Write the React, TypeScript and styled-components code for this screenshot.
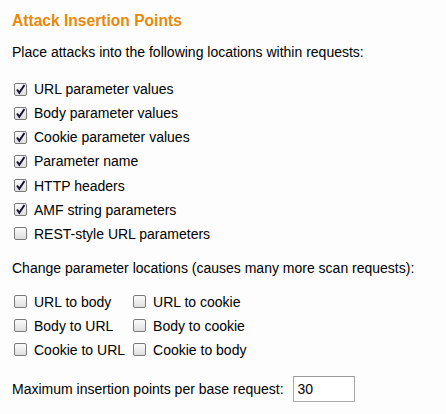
import React from 'react';
import styled, {createGlobalStyle} from 'styled-components';

const GlobalStyles = createGlobalStyle`
  html, body {
    margin: 0;
    padding: 0;
    background: #fdfdfd;
  }
  body {
    font-family: "Liberation Sans", Arial, sans-serif;
    font-size: 14px;
    color: #000;
  }
`

const Panel = styled.section`
  width: 446px;
  height: 414px;
  padding: 11px 12px 0;
  box-sizing: border-box;
  display: flex;
  flex-direction: column;
`

const Title = styled.h2`
  margin: 0;
  font-size: 15.6px;
  font-weight: bold;
  color: #e8890c;
  line-height: 20px;
`

const Text = styled.p<{ top: number }>`
  margin: ${({top}) => top}px 0 0;
  line-height: 16px;
`

const List = styled.div`
  display: flex;
  flex-direction: column;
  gap: 8.17px;
  margin-top: 21px;
  padding-left: 2px;
`

const Grid = styled.div`
  display: grid;
  grid-template-columns: auto auto;
  justify-content: start;
  column-gap: 8px;
  row-gap: 8px;
  margin-top: 18px;
  padding-left: 2px;
`

const Row = styled.label`
  display: flex;
  align-items: center;
  gap: 7px;
  height: 16px;
  line-height: 16px;
  white-space: nowrap;
`

const Box = styled.span<{ checked: boolean }>`
  width: 13px;
  height: 13px;
  box-sizing: border-box;
  border: 1px solid #7a7a7a;
  border-radius: 2px;
  background: linear-gradient(#fbfbfb, #dedede);
  display: flex;
  align-items: center;
  justify-content: center;
  flex-shrink: 0;
`

const Field = styled.div`
  display: flex;
  align-items: center;
  gap: 9px;
  margin-top: 18px;
`

const NumberInput = styled.input`
  width: 62px;
  height: 26px;
  box-sizing: border-box;
  border: 1px solid #a9a9a9;
  border-top-color: #9a9a9a;
  padding: 0 4px;
  font-family: "Liberation Sans", Arial, sans-serif;
  font-size: 14px;
  background: #fff;
  outline: none;
`

function Checkbox({checked, label}: { checked: boolean, label: string }) {
  return (
    <Row>
      <Box checked={checked}>
        {checked && (
          <svg width="11" height="11" viewBox="0 0 11 11">
            <path d="M2 5.5 L4.3 8.8 L9.5 1" fill="none" stroke="#141430" strokeWidth="2"/>
          </svg>
        )}
      </Box>
      {label}
    </Row>
  );
}

const points = [
  {label: 'URL parameter values', checked: true},
  {label: 'Body parameter values', checked: true},
  {label: 'Cookie parameter values', checked: true},
  {label: 'Parameter name', checked: true},
  {label: 'HTTP headers', checked: true},
  {label: 'AMF string parameters', checked: true},
  {label: 'REST-style URL parameters', checked: false},
];

const moves = ['URL to body', 'URL to cookie', 'Body to URL', 'Body to cookie', 'Cookie to URL', 'Cookie to body'];

function App() {
  return (
    <Panel>
      <GlobalStyles/>
      <Title>Attack Insertion Points</Title>
      <Text top={13}>Place attacks into the following locations within requests:</Text>
      <List>
        {points.map(p => <Checkbox key={p.label} checked={p.checked} label={p.label}/>)}
      </List>
      <Text top={18}>Change parameter locations (causes many more scan requests):</Text>
      <Grid>
        {moves.map(m => <Checkbox key={m} checked={false} label={m}/>)}
      </Grid>
      <Field>
        <span>Maximum insertion points per base request:</span>
        <NumberInput defaultValue="30"/>
      </Field>
    </Panel>
  );
}

export default App;
